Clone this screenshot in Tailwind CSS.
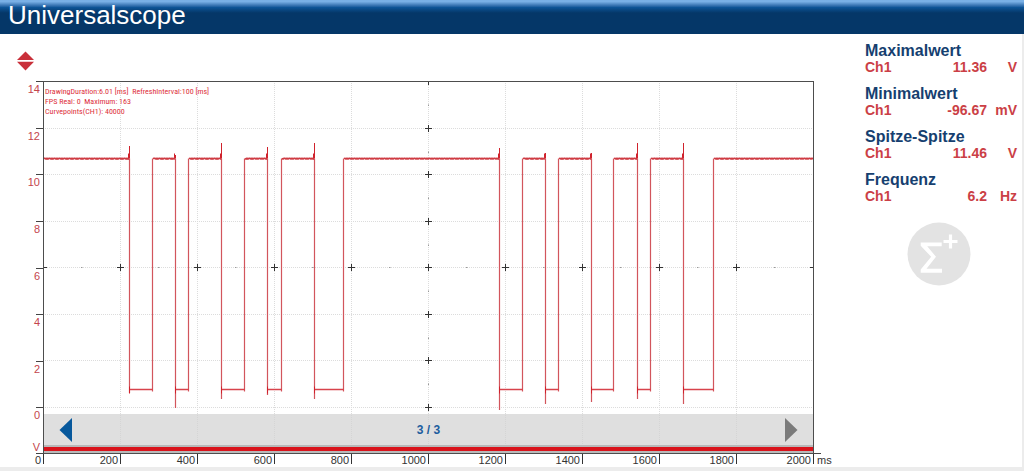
<!DOCTYPE html>
<html lang="de">
  <head>
    <meta charset="UTF-8" />
    <meta name="viewport" content="width=device-width, initial-scale=1.0" />
    <title>Universalscope</title>
    <script src="https://cdn.jsdelivr.net/npm/@tailwindcss/browser@4"></script>
  </head>

  <body class="min-h-screen flex flex-col bg-white font-['Liberation_Sans',Arial,sans-serif]">
    <header
      class="h-[34px] pl-2 bg-linear-to-b from-[#79b0e6] from-5% via-[#0d5496] via-22% to-[#053768] to-38%"
    >
      <h1 class="text-[26px] leading-[30px] text-white">Universalscope</h1>
    </header>

    <main class="flex flex-1 border-r-2 border-[#ececec]">
      <section class="flex-1">
        <div class="h-[47px] pl-4 pt-[17px]">
          <button class="block" aria-label="Kanal verschieben">
            <svg width="19" height="20" viewBox="0 0 19 20" fill="#c9303a">
              <path d="M9.5 0.5 L18 9 H1 Z" />
              <path d="M1 10.8 H18 L9.5 19.5 Z" />
            </svg>
          </button>
        </div>

        <div class="grid grid-cols-[43px_1fr_51px]">
          <!-- y axis -->
          <div class="flex flex-col text-[11px] leading-[14px] text-[#c4454c]">
            <div class="flex-1 flex justify-end"><span class="pt-[1px] -mr-1">14</span><i class="w-[7px] border-t border-[#444]"></i></div>
            <div class="flex-1 flex justify-end"><span class="pt-[1px] -mr-1">12</span><i class="w-[7px] border-t border-[#444]"></i></div>
            <div class="flex-1 flex justify-end"><span class="pt-[1px] -mr-1">10</span><i class="w-[7px] border-t border-[#444]"></i></div>
            <div class="flex-1 flex justify-end"><span class="pt-[1px] -mr-1">8</span><i class="w-[7px] border-t border-[#444]"></i></div>
            <div class="flex-1 flex justify-end"><span class="pt-[1px] -mr-1">6</span><i class="w-[7px] border-t border-[#444]"></i></div>
            <div class="flex-1 flex justify-end"><span class="pt-[1px] -mr-1">4</span><i class="w-[7px] border-t border-[#444]"></i></div>
            <div class="flex-1 flex justify-end"><span class="pt-[1px] -mr-1">2</span><i class="w-[7px] border-t border-[#444]"></i></div>
            <div class="flex-1 flex justify-end">
              <span class="pt-[1px] -mr-1 flex flex-col justify-between items-end"><b class="font-normal">0</b><b class="font-normal">V</b></span>
              <i class="w-[7px] border-y border-[#444]"></i>
            </div>
          </div>

          <!-- plot -->
          <div class="relative h-[373px]">
            <svg id="plot" class="block w-full h-full" viewBox="0 0 771 373" preserveAspectRatio="none" fill="none">
              <path id="grid" stroke="#dcdcdc" stroke-dasharray="1 1" />
              <path id="dots" stroke="#999" />
              <path id="crosses" stroke="#333" />
              <path id="edges" stroke="#d2555c" stroke-width="1.2" />
              <path id="spikes" stroke="#d0222c" />
              <path id="lows" stroke="#d8434c" stroke-width="1.4" />
              <path id="levels" stroke="#cf3b43" stroke-width="1.7" />
            </svg>

            <p class="absolute top-[6px] left-[2px] font-['Roboto_Condensed','Liberation_Sans',sans-serif] text-[8px] leading-[10px] text-[#dd2f3a] whitespace-pre">DrawingDuration:6.01 [ms]  RefreshInterval:100 [ms]
FPS Real: 0  Maximum: 163
Curvepoints(CH1): 40000</p>

            <nav class="absolute inset-x-px bottom-px bg-[#d2d2d2]/70">
              <div class="h-[31px] px-[15px] flex items-center justify-between">
                <button aria-label="Zurück">
                  <svg width="13" height="24" viewBox="0 0 13 24" fill="#07589c"><path d="M13 0 V24 L0.5 12 Z" /></svg>
                </button>
                <span class="text-[12px] font-bold text-[#1c5d9e]">3 / 3</span>
                <button aria-label="Weiter">
                  <svg width="13" height="24" viewBox="0 0 13 24" fill="#7b7b7b"><path d="M0 0 V24 L12.5 12 Z" /></svg>
                </button>
              </div>
              <div class="h-[8px] py-[2px] bg-[#b9b9b9]">
                <div class="h-[4px] bg-[#d9131b]"></div>
              </div>
            </nav>
            <div class="absolute inset-0 border border-[#4d4d4d] pointer-events-none"></div>
          </div>
          <div class="flex items-end"><i class="w-[7px] border-t border-[#444]"></i></div>

          <!-- x axis -->
          <div class="h-[13px] flex justify-end text-[11px] leading-[12px] text-[#333]">
            <span class="-mr-px h-[10px] pr-[2px] border-r border-[#333]">0</span>
          </div>
          <div class="ml-px grid grid-cols-10 text-right text-[11px] leading-[12px] text-[#333]">
            <span class="h-[10px] pr-[2px] border-r border-[#333]">200</span>
            <span class="h-[10px] pr-[2px] border-r border-[#333]">400</span>
            <span class="h-[10px] pr-[2px] border-r border-[#333]">600</span>
            <span class="h-[10px] pr-[2px] border-r border-[#333]">800</span>
            <span class="h-[10px] pr-[2px] border-r border-[#333]">1000</span>
            <span class="h-[10px] pr-[2px] border-r border-[#333]">1200</span>
            <span class="h-[10px] pr-[2px] border-r border-[#333]">1400</span>
            <span class="h-[10px] pr-[2px] border-r border-[#333]">1600</span>
            <span class="h-[10px] pr-[2px] border-r border-[#333]">1800</span>
            <span class="h-[10px] pr-[2px] border-r border-[#333]">2000</span>
          </div>
          <span class="pl-[3px] text-[11px] leading-[12px] text-[#333]">ms</span>
        </div>
      </section>

      <aside class="w-[157px] pt-2 pr-[5px] text-[14px] leading-4 font-bold text-[#cb3f46]">
        <dl class="flex flex-col gap-[10px]">
          <div>
            <dt class="text-[16px] leading-[17px] text-[#163f70]">Maximalwert</dt>
            <dd class="grid grid-cols-[1fr_auto_30px]"><span>Ch1</span><span>11.36</span><span class="text-right">V</span></dd>
          </div>
          <div>
            <dt class="text-[16px] leading-[17px] text-[#163f70]">Minimalwert</dt>
            <dd class="grid grid-cols-[1fr_auto_30px]"><span>Ch1</span><span>-96.67</span><span class="text-right">mV</span></dd>
          </div>
          <div>
            <dt class="text-[16px] leading-[17px] text-[#163f70]">Spitze-Spitze</dt>
            <dd class="grid grid-cols-[1fr_auto_30px]"><span>Ch1</span><span>11.46</span><span class="text-right">V</span></dd>
          </div>
          <div>
            <dt class="text-[16px] leading-[17px] text-[#163f70]">Frequenz</dt>
            <dd class="grid grid-cols-[1fr_auto_30px]"><span>Ch1</span><span>6.2</span><span class="text-right">Hz</span></dd>
          </div>
        </dl>
        <button class="block mt-[18px] ml-[42px]" aria-label="Messwert hinzufügen">
          <svg width="64" height="64" viewBox="0 0 64 64" fill="#fff">
            <circle cx="32" cy="32" r="31.5" fill="#e3e3e3" />
            <path d="M13.7 20.4 H34.7 V24.2 H20.2 L29 34.8 L19.5 46.8 H35 V50.8 H13.7 V47.5 L24.2 34.8 L13.7 23.8 Z" />
            <path d="M43.5 12.5 V26.5 M36.5 19.5 H50.5" stroke="#fff" stroke-width="3.2" />
          </svg>
        </button>
      </aside>
    </main>
    <footer class="h-1 bg-[#ececec]"></footer>
  </body>
  <script>
    // one entry per pulse: falling edge x, spike top y, undershoot y, rising edge x
    const pulses = [
      [86, 65, 312, 110],
      [132, 74, 327, 146],
      [178, 62, 318, 202],
      [224, 66, 314, 239],
      [271, 62, 318, 301],
      [456, 67, 329, 480],
      [502, 72, 323, 516],
      [548, 72, 321, 571],
      [594, 62, 318, 608],
      [640, 62, 323, 671],
    ];
    const high = 77.5;
    const low = 308.5;

    const set = (id, d) => document.getElementById(id).setAttribute("d", d);

    let grid = "";
    let dots = "";
    let crosses = "";
    for (let i = 1; i < 10; i++) grid += `M${i * 77 + 0.5} 0V372`;
    for (let i = 1; i < 8; i++) grid += `M0 ${Math.round(i * 46.5) + 0.5}H770`;
    for (let i = 0; i <= 10; i++) {
      const x = i * 77 + 0.5;
      crosses += `M${x - 3.5} 186.5h7M${x} 183v7`;
      if (i < 10) dots += `M${i * 77 + 38} 186.5h1.5`;
    }
    for (let i = 0; i < 8; i++) {
      const y = Math.round(i * 46.5) + 0.5;
      crosses += `M382 ${y}h7M385.5 ${y - 3.5}v7`;
      dots += `M385.5 ${y + 23}v1.5`;
    }

    let edges = "";
    let spikes = "";
    let levels = "";
    let lows = "";
    let start = 0;
    // slightly noisy high level
    const level = (from, to) => {
      levels += `M${from} ${high}`;
      for (let x = from + 1; x <= to; x++) {
        levels += `L${x} ${high + ((x * 7) % 5 < 2 ? 0.5 : -0.2)}`;
      }
    };
    for (const [fall, top, bottom, rise] of pulses) {
      level(start, fall);
      edges += `M${fall + 0.5} ${high}V${bottom}M${rise - 0.5} ${high}V${low + 2}`;
      spikes += `M${fall - 0.5} ${high + 1}V${high - 5}M${fall + 0.5} ${high}V${top}`;
      spikes += `M${fall + 0.5} ${low - 3}V${low + 4}`;
      lows += `M${fall + 1} ${low}H${rise}`;
      start = rise;
    }
    level(start, 770);

    set("grid", grid);
    set("dots", dots);
    set("crosses", crosses);
    set("edges", edges);
    set("spikes", spikes);
    set("levels", levels);
    set("lows", lows);
  </script>
</html>
